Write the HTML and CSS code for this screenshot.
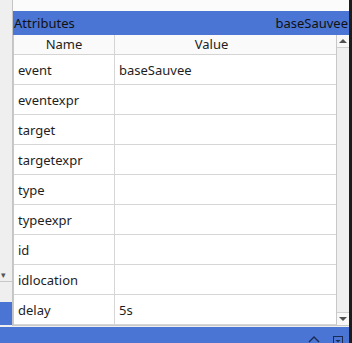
FILE: index.html
```html
<!DOCTYPE html>
<html lang="en">
<head>
    <meta charset="UTF-8">
    <title>Attributes</title>
    <link rel="stylesheet" href="styles.css">
</head>
<body>
    <div class="window">
        <div class="main">
            <div class="workspace">
                <div class="side">
                    <div class="side-top"></div>
                    <div class="side-arrow">&#9662;</div>
                    <div class="side-gap"></div>
                    <div class="side-sel"></div>
                </div>
                <div class="panel">
                    <div class="gap"></div>
                    <div class="title">
                        <span>Attributes</span>
                        <span>baseSauvee</span>
                    </div>
                    <div class="view">
                        <div class="grid">
                            <div class="head name">Name</div>
                            <div class="head value">Value</div>

                            <div class="cell">event</div><div class="cell">baseSauvee</div>
                            <div class="cell">eventexpr</div><div class="cell"></div>
                            <div class="cell">target</div><div class="cell"></div>
                            <div class="cell">targetexpr</div><div class="cell"></div>
                            <div class="cell">type</div><div class="cell"></div>
                            <div class="cell">typeexpr</div><div class="cell"></div>
                            <div class="cell">id</div><div class="cell"></div>
                            <div class="cell">idlocation</div><div class="cell"></div>
                            <div class="cell">delay</div><div class="cell">5s</div>
                        </div>
                        <div class="scroll">
                            <div class="btn up"><svg width="8" height="5" viewBox="0 0 8 5"><path d="M0 5 L4 1 L8 5 Z" fill="#505050"/></svg></div>
                            <div class="track"></div>
                            <div class="btn down"><svg width="8" height="5" viewBox="0 0 8 5"><path d="M0 0 L4 4 L8 0 Z" fill="#505050"/></svg></div>
                        </div>
                    </div>
                </div>
            </div>
            <div class="status">
                <svg class="chev" width="12" height="8" viewBox="0 0 12 8"><path d="M1 7 L6 2 L11 7" fill="none" stroke="#1a2a50" stroke-width="1.4"/></svg>
                <svg class="box" width="10" height="10" viewBox="0 0 10 10"><rect x="0.5" y="0.5" width="9" height="9" fill="none" stroke="#1a2a50"/><path d="M2.5 4 L5 6.5 L7.5 4 Z" fill="#1a2a50"/></svg>
            </div>
        </div>
        <div class="edge"></div>
    </div>
</body>
</html>
```

FILE: styles.css
```css
*{
    margin: 0;
    padding: 0;
    box-sizing: border-box;
}
body{
    width: 352px;
    height: 343px;
    overflow: hidden;
    font-family: "Noto Sans", "Open Sans", sans-serif;
    font-size: 13px;
    color: #1e1e1e;
    background: #efefef;
}
.window{
    display: flex;
    height: 343px;
}
.main{
    flex: 1;
    display: flex;
    flex-direction: column;
}
.edge{
    width: 3px;
    background: #1c1c1c;
}
.workspace{
    flex: 1;
    display: flex;
    min-height: 0;
}
.side{
    width: 13px;
    border-right: 1px solid #c4c4c4;
    background: #efefef;
    display: flex;
    flex-direction: column;
}
.side-top{
    height: 266px;
}
.side-arrow{
    height: 16px;
    font-size: 9px;
    line-height: 17px;
    color: #555;
    padding-left: 1px;
    border-bottom: 1px solid #c8c8c8;
}
.side-gap{
    height: 20px;
}
.side-sel{
    height: 23px;
    background: #4a75d4;
}
.panel{
    flex: 1;
    display: flex;
    flex-direction: column;
    background: #fbfbfb;
}
.gap{
    height: 11px;
}
.title{
    height: 24px;
    background: #4a75d4;
    display: flex;
    justify-content: space-between;
    align-items: center;
    padding: 0 1px 0 1px;
    font-size: 13px;
    color: #111;
}
.view{
    display: flex;
    height: 292px;
    border-bottom: 1px solid #c8c8c8;
}
.grid{
    flex: 1;
    display: grid;
    grid-template-columns: 101px 1fr;
    grid-auto-rows: 30px;
    grid-template-rows: 20px;
    border-left: 1px solid #c8c8c8;
    border-right: 1px solid #c8c8c8;
    background: #fff;
}
.head{
    background: #fafafa;
    border-bottom: 1px solid #d4d4d4;
    text-align: center;
    line-height: 19px;
}
.head.name{
    border-right: 1px solid #d4d4d4;
}
.head.value{
    padding-right: 28px;
}
.cell{
    border-bottom: 1px solid #d6d6d6;
    padding-left: 4px;
    line-height: 30px;
}
.cell:nth-child(odd){
    border-right: 1px solid #d6d6d6;
}
.scroll{
    width: 12px;
    display: flex;
    flex-direction: column;
    background: #efefef;
}
.btn{
    height: 13px;
    background: #f7f7f7;
    display: flex;
    align-items: center;
    justify-content: center;
}
.btn.up{
    border-bottom: 1px solid #d0d0d0;
}
.btn.down{
    border-top: 1px solid #d0d0d0;
}
.track{
    flex: 1;
}
.status{
    height: 16px;
    margin-top: 1px;
    background: #4a75d4;
    position: relative;
}
.chev{
    position: absolute;
    left: 308px;
    top: 8px;
}
.box{
    position: absolute;
    left: 333px;
    top: 9px;
}
```
